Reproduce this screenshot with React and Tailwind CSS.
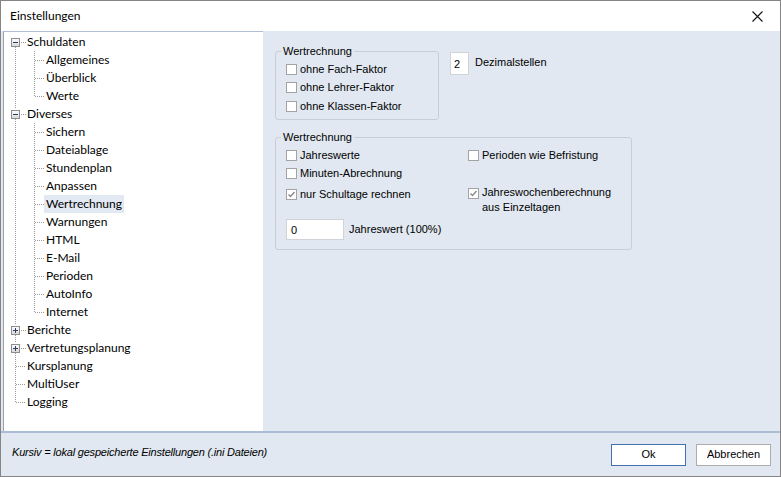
import React from 'react';

const tree = [
  { label: 'Schuldaten', level: 0, box: 'minus', first: true },
  { label: 'Allgemeines', level: 1 },
  { label: 'Überblick', level: 1 },
  { label: 'Werte', level: 1, lastChild: true },
  { label: 'Diverses', level: 0, box: 'minus' },
  { label: 'Sichern', level: 1 },
  { label: 'Dateiablage', level: 1 },
  { label: 'Stundenplan', level: 1 },
  { label: 'Anpassen', level: 1 },
  { label: 'Wertrechnung', level: 1, selected: true },
  { label: 'Warnungen', level: 1 },
  { label: 'HTML', level: 1 },
  { label: 'E-Mail', level: 1 },
  { label: 'Perioden', level: 1 },
  { label: 'AutoInfo', level: 1 },
  { label: 'Internet', level: 1, lastChild: true },
  { label: 'Berichte', level: 0, box: 'plus' },
  { label: 'Vertretungsplanung', level: 0, box: 'plus' },
  { label: 'Kursplanung', level: 0 },
  { label: 'MultiUser', level: 0 },
  { label: 'Logging', level: 0, last: true },
];

const DOT = { stroke: '#9a9a9a', strokeWidth: 1, strokeDasharray: '1 1', shapeRendering: 'crispEdges' };

// connector lines + expander box for one tree row
const TreeLines = ({ item }) => {
  const w = item.level ? 42 : 23;
  return (
    <svg width={w} height="18" className="shrink-0">
      {item.level === 0 ? (
        <>
          {item.box ? (
            <>
              {!item.first && <line x1="11.5" y1="0" x2="11.5" y2="4" {...DOT} />}
              {!item.last && <line x1="11.5" y1="14" x2="11.5" y2="18" {...DOT} />}
            </>
          ) : (
            <line x1="11.5" y1="0" x2="11.5" y2={item.last ? 10 : 18} {...DOT} />
          )}
          <line x1={item.box ? 17 : 12} y1="9.5" x2="22" y2="9.5" {...DOT} />
          {item.box && (
            <g shapeRendering="crispEdges">
              <defs>
                <linearGradient id="bx" x1="0" y1="0" x2="0" y2="1">
                  <stop offset="0" stopColor="#ffffff" />
                  <stop offset="1" stopColor="#d6d6d6" />
                </linearGradient>
              </defs>
              <rect x="7.5" y="5.5" width="8" height="8" fill="url(#bx)" stroke="#8e8e8e" />
              <line x1="9" y1="9.5" x2="14" y2="9.5" stroke="#2d3f6b" />
              {item.box === 'plus' && <line x1="11.5" y1="7" x2="11.5" y2="12" stroke="#2d3f6b" />}
            </g>
          )}
        </>
      ) : (
        <>
          <line x1="11.5" y1="0" x2="11.5" y2="18" {...DOT} />
          <line x1="30.5" y1="0" x2="30.5" y2={item.lastChild ? 10 : 18} {...DOT} />
          <line x1="31" y1="9.5" x2="41" y2="9.5" {...DOT} />
        </>
      )}
    </svg>
  );
};

const Check = ({ checked }) => (
  <span className="w-[11px] h-[11px] shrink-0 border border-[#a3a3a3] bg-white flex items-center justify-center">
    {checked && (
      <svg width="9" height="9" viewBox="0 0 9 9">
        <path d="M1.5 4.5 L3.5 6.5 L7.5 2" fill="none" stroke="#8a8a8a" strokeWidth="1.4" />
      </svg>
    )}
  </span>
);

const CheckRow = ({ label, checked, className = '' }) => (
  <div className={`flex items-center h-[18px] ${className}`}>
    <Check checked={checked} />
    <span className="ml-[3px]">{label}</span>
  </div>
);

export default function App() {
  return (
    <div className="w-[781px] h-[477px] border border-[#858585] flex flex-col bg-[#e1e8f1] text-black font-['Lato',sans-serif] overflow-hidden">
      {/* Title bar */}
      <div className="h-[30px] shrink-0 bg-white flex items-center justify-between pl-[9px] pr-[17px]">
        <span className="text-[12px]">Einstellungen</span>
        <svg width="11" height="11" viewBox="0 0 11 11">
          <path d="M0.5 0.5 L10.5 10.5 M10.5 0.5 L0.5 10.5" stroke="#111" strokeWidth="1.1" />
        </svg>
      </div>

      {/* Body */}
      <div className="h-[400px] shrink-0 flex pl-[2px]">
        {/* Tree */}
        <div className="w-[260px] shrink-0 bg-white border-l border-l-[#a0a0a0] border-t border-t-[#aebfd6] pt-[1px] text-[12px]">
          {tree.map((item) => (
            <div key={item.label} className="flex items-center h-[18px]">
              <TreeLines item={item} />
              <span
                className={`leading-[18px] px-[2px] -ml-[2px] ${item.selected ? 'bg-[#e3e9f2]' : ''}`}
              >
                {item.label}
              </span>
            </div>
          ))}
        </div>

        {/* Settings */}
        <div className="flex-1 pl-[12px] pt-[14px] text-[11px] font-['Liberation_Sans',Arial,sans-serif]">
          <div className="flex items-start">
            <fieldset className="w-[164px] h-[75px] border border-[#c8ced6] rounded-[3px]">
              <legend className="ml-[5px] px-[2px] leading-[13px]">Wertrechnung</legend>
              <div className="pl-[10px] mt-[2px]">
                <CheckRow label="ohne Fach-Faktor" />
                <CheckRow label="ohne Lehrer-Faktor" />
                <CheckRow label="ohne Klassen-Faktor" className="mt-[1px]" />
              </div>
            </fieldset>
            <div className="flex items-center ml-[11px] mt-[7px]">
              <div className="w-[19px] h-[23px] bg-white border border-[#d0d3d8] pl-[3px] pt-[3px]">2</div>
              <span className="ml-[6px] -mt-[2px]">Dezimalstellen</span>
            </div>
          </div>

          <fieldset className="w-[357px] h-[119px] mt-[11px] border border-[#c8ced6] rounded-[3px]">
            <legend className="ml-[5px] px-[2px] leading-[13px]">Wertrechnung</legend>
            <div className="flex mt-[2px]">
              <div className="w-[192px] pl-[10px]">
                <CheckRow label="Jahreswerte" />
                <CheckRow label="Minuten-Abrechnung" />
                <CheckRow label="nur Schultage rechnen" checked className="mt-[3px]" />
                <div className="flex items-center mt-[16px]">
                  <div className="w-[58px] h-[21px] bg-white border border-[#d0d3d8] pl-[4px] pt-[2px]">0</div>
                  <span className="ml-[5px]">Jahreswert (100%)</span>
                </div>
              </div>
              <div>
                <CheckRow label="Perioden wie Befristung" />
                <div className="flex items-start mt-[21px]">
                  <span className="mt-[3px]">
                    <Check checked />
                  </span>
                  <span className="ml-[3px] leading-[15px]">
                    Jahreswochenberechnung
                    <br />
                    aus Einzeltagen
                  </span>
                </div>
              </div>
            </div>
          </fieldset>
        </div>
      </div>

      {/* Footer */}
      <div className="flex-1 border-t-2 border-[#aabdd6] flex items-center justify-between pl-[11px] pr-[9px] text-[11px] font-['Liberation_Sans',Arial,sans-serif]">
        <span className="italic -mt-[4px] tracking-[-0.2px]">Kursiv = lokal gespeicherte Einstellungen (.ini Dateien)</span>
        <div className="flex gap-[10px]">
          <button className="w-[75px] h-[22px] bg-white border border-[#4470ad]">Ok</button>
          <button className="w-[75px] h-[22px] bg-white border border-[#adadad]">Abbrechen</button>
        </div>
      </div>
    </div>
  );
}
